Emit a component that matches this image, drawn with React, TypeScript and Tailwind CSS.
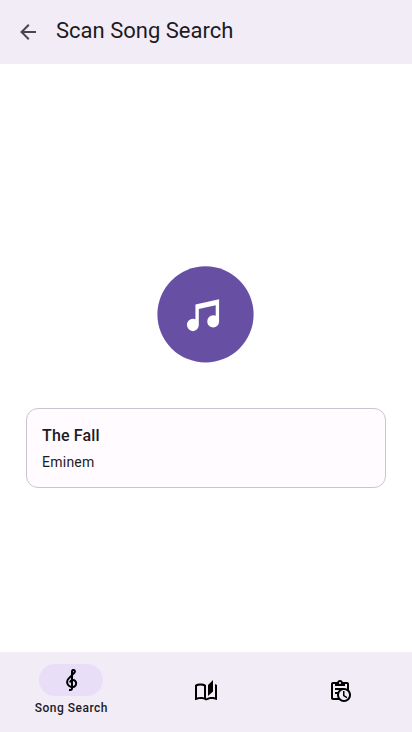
import React from "react";

const paths = {
  back: "M20 11V13H8L13.5 18.5L12.08 19.92L4.16 12L12.08 4.08L13.5 5.5L8 11H20Z",
  music:
    "M21 3V15.5A3.5 3.5 0 0 1 17.5 19A3.5 3.5 0 0 1 14 15.5A3.5 3.5 0 0 1 17.5 12C18.04 12 18.55 12.12 19 12.34V6.47L9 8.6V17.5A3.5 3.5 0 0 1 5.5 21A3.5 3.5 0 0 1 2 17.5A3.5 3.5 0 0 1 5.5 14C6.04 14 6.55 14.12 7 14.34V6L21 3Z",
  clef: "M13 11V7.5L15.2 5.29C16 4.5 16.15 3.24 15.59 2.26C15.14 1.47 14.32 1 13.45 1C13.24 1 13 1.03 12.81 1.09C11.73 1.38 11 2.38 11 3.5V6.74L7.86 9.91C6.2 11.6 5.7 14.13 6.61 16.34C7.38 18.24 9.06 19.55 11 19.89V20.5C11 20.76 10.77 21 10.5 21H9V23H10.5C11.85 23 13 21.89 13 20.5V20C15.03 20 17.16 18.08 17.16 15.25C17.16 12.95 15.24 11 13 11M13 3.5C13 3.27 13.11 3.09 13.32 3.03C13.54 2.97 13.77 3.06 13.88 3.26C14 3.46 13.96 3.71 13.8 3.87L13 4.73V3.5M11 11.5C10.03 12.14 9.3 13.24 9.04 14.26L11 14.78V17.83C9.87 17.53 8.9 16.71 8.43 15.57C7.84 14.11 8.16 12.45 9.26 11.33L11 9.5V11.5M13 18V12.94C14.17 12.94 15.18 14.04 15.18 15.25C15.18 17 13.91 18 13 18Z",
  book: "M19 1L14 6V17L19 12.5V1M21 5V18.5C19.9 18.15 18.7 18 17.5 18C15.8 18 13.35 18.65 12 19.5V6C10.55 4.9 8.45 4.5 6.5 4.5C4.55 4.5 2.45 4.9 1 6V20.65C1 20.9 1.25 21.15 1.5 21.15C1.6 21.15 1.65 21.1 1.75 21.1C3.1 20.45 5.05 20 6.5 20C8.45 20 10.55 20.4 12 21.5C13.35 20.65 15.8 20 17.5 20C19.15 20 20.85 20.3 22.25 21.05C22.35 21.1 22.4 21.1 22.5 21.1C22.75 21.1 23 20.85 23 20.6V6C22.4 5.55 21.75 5.25 21 5M10 18.41C8.75 18.09 7.5 18 6.5 18C5.44 18 4.18 18.19 3 18.5V7.13C3.91 6.73 5.14 6.5 6.5 6.5C7.86 6.5 9.09 6.73 10 7.13V18.41Z",
  history:
    "M21 11.11V5C21 3.9 20.11 3 19 3H14.82C14.4 1.84 13.3 1 12 1S9.6 1.84 9.18 3H5C3.9 3 3 3.9 3 5V19C3 20.11 3.9 21 5 21H11.11C12.37 22.24 14.09 23 16 23C19.87 23 23 19.87 23 16C23 14.09 22.24 12.37 21 11.11M12 3C12.55 3 13 3.45 13 4S12.55 5 12 5 11 4.55 11 4 11.45 3 12 3M5 19V5H7V7H17V5H19V9.68C18.09 9.25 17.08 9 16 9H7V11H11.1C10.5 11.57 10.04 12.25 9.68 13H7V15H9.08C9.03 15.33 9 15.66 9 16C9 17.08 9.25 18.09 9.68 19H5M16 21C13.24 21 11 18.76 11 16S13.24 11 16 11 21 13.24 21 16 18.76 21 16 21M16.5 16.25L19.36 17.94L18.61 19.16L15 17V12H16.5V16.25Z",
};

function Icon({ name, className }: { name: keyof typeof paths; className: string }) {
  return (
    <svg viewBox="0 0 24 24" fill="currentColor" className={className} aria-hidden="true">
      <path d={paths[name]} />
    </svg>
  );
}

export default function App() {
  return (
    <div className="flex h-screen w-full flex-col bg-white font-['Roboto',sans-serif] text-[#1c1b1f]">
      <header className="flex h-16 shrink-0 items-center gap-4 bg-[#f2ecf7] px-4">
        <button aria-label="Back">
          <Icon name="back" className="size-6 text-[#49454f]" />
        </button>
        <h1 className="pb-0.5 text-[22px] leading-7">Scan Song Search</h1>
      </header>

      <main className="flex flex-1 flex-col items-center pt-[202px]">
        <button aria-label="Listen" className="rounded-full">
          <svg viewBox="0 0 98 98" className="size-[98px]" aria-hidden="true">
            <circle cx="48.5" cy="48.4" r="48.1" className="fill-[#6750a4]" />
            <path d={paths.music} transform="translate(26.6 27.8) scale(1.69 1.78)" className="fill-white" />
          </svg>
        </button>
        <section className="mt-11 h-20 w-[360px] rounded-xl border border-[#cac4d0] bg-[#fffbff] px-[15px] pt-[15px]">
          <h2 className="text-base leading-6 font-medium tracking-[0.15px]">The Fall</h2>
          <p className="mt-1 text-sm leading-5 tracking-[0.25px]">Eminem</p>
        </section>
      </main>

      <nav className="grid h-20 shrink-0 grid-cols-3 bg-[#f2ecf7] px-1 text-black">
        <button className="flex flex-col items-center pt-3">
          <span className="flex h-8 w-16 items-center justify-center rounded-full bg-[#e8def8] pl-px">
            <Icon name="clef" className="size-6" />
          </span>
          <span className="mt-1 text-xs leading-4 font-medium tracking-[0.5px] text-[#1c1b1f]">Song Search</span>
        </button>
        <button aria-label="Library" className="flex items-center justify-center pb-0.5">
          <Icon name="book" className="size-6" />
        </button>
        <button aria-label="History" className="flex items-center justify-center pr-0.5 pb-0.5">
          <Icon name="history" className="size-6" />
        </button>
      </nav>
    </div>
  );
}
